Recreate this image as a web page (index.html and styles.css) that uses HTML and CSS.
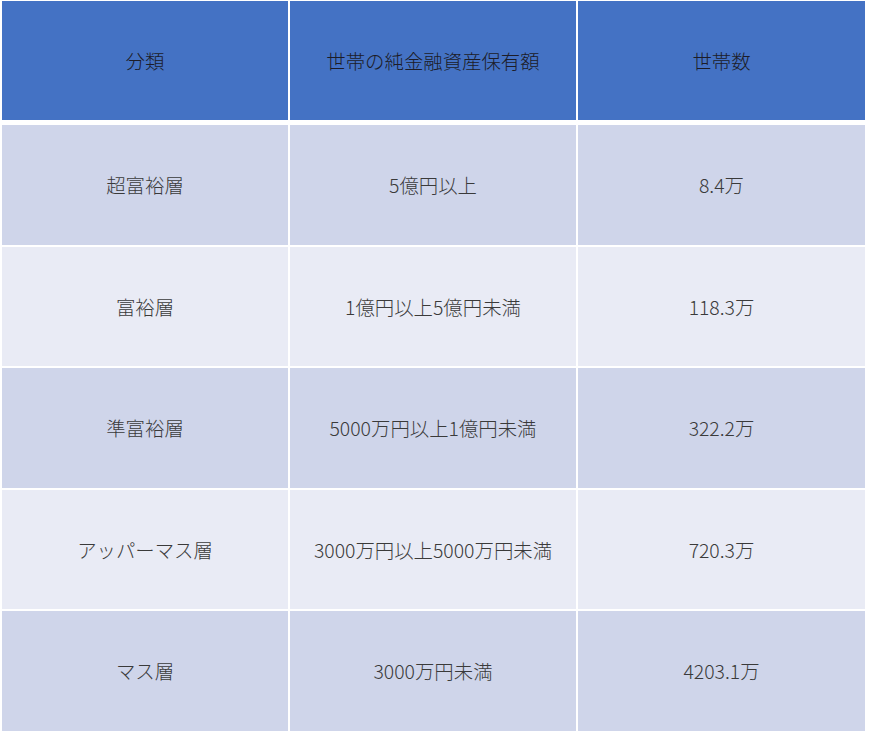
FILE: index.html
```html
<!DOCTYPE html>
<html lang="ja">
<head>
<meta charset="utf-8">
<link rel="stylesheet" href="styles.css">
</head>
<body>
<div class="table">
  <div class="row head">
    <div class="cell">分類</div>
    <div class="cell">世帯の純金融資産保有額</div>
    <div class="cell">世帯数</div>
  </div>
  <div class="body">
    <div class="row dark">
      <div class="cell">超富裕層</div>
      <div class="cell">5億円以上</div>
      <div class="cell">8.4万</div>
    </div>
    <div class="row light">
      <div class="cell">富裕層</div>
      <div class="cell">1億円以上5億円未満</div>
      <div class="cell">118.3万</div>
    </div>
    <div class="row dark">
      <div class="cell">準富裕層</div>
      <div class="cell">5000万円以上1億円未満</div>
      <div class="cell">322.2万</div>
    </div>
    <div class="row light">
      <div class="cell">アッパーマス層</div>
      <div class="cell">3000万円以上5000万円未満</div>
      <div class="cell">720.3万</div>
    </div>
    <div class="row dark">
      <div class="cell">マス層</div>
      <div class="cell">3000万円未満</div>
      <div class="cell">4203.1万</div>
    </div>
  </div>
</div>
</body>
</html>
```

FILE: styles.css
```css
html, body {
  margin: 0;
  padding: 0;
  background: #ffffff;
}
body {
  padding: 1px 0 0 2px;
  font-family: "Noto Sans CJK JP", "Noto Sans", sans-serif;
  font-size: 19.4px;
  font-weight: 300;
  color: #3a3a3a;
}
.table {
  width: 863px;
}
.row {
  display: grid;
  grid-template-columns: 286px 286px 287px;
  column-gap: 2px;
}
.cell {
  display: flex;
  align-items: center;
  justify-content: center;
}
.head .cell {
  height: 119px;
  background: #4472c4;
  color: #1c1c28;
}
.body {
  margin-top: 5px;
  display: flex;
  flex-direction: column;
  gap: 2px;
}
.body .cell {
  height: 119.5px;
}
.dark .cell {
  background: #cfd5ea;
}
.light .cell {
  background: #e9ebf5;
}
```
